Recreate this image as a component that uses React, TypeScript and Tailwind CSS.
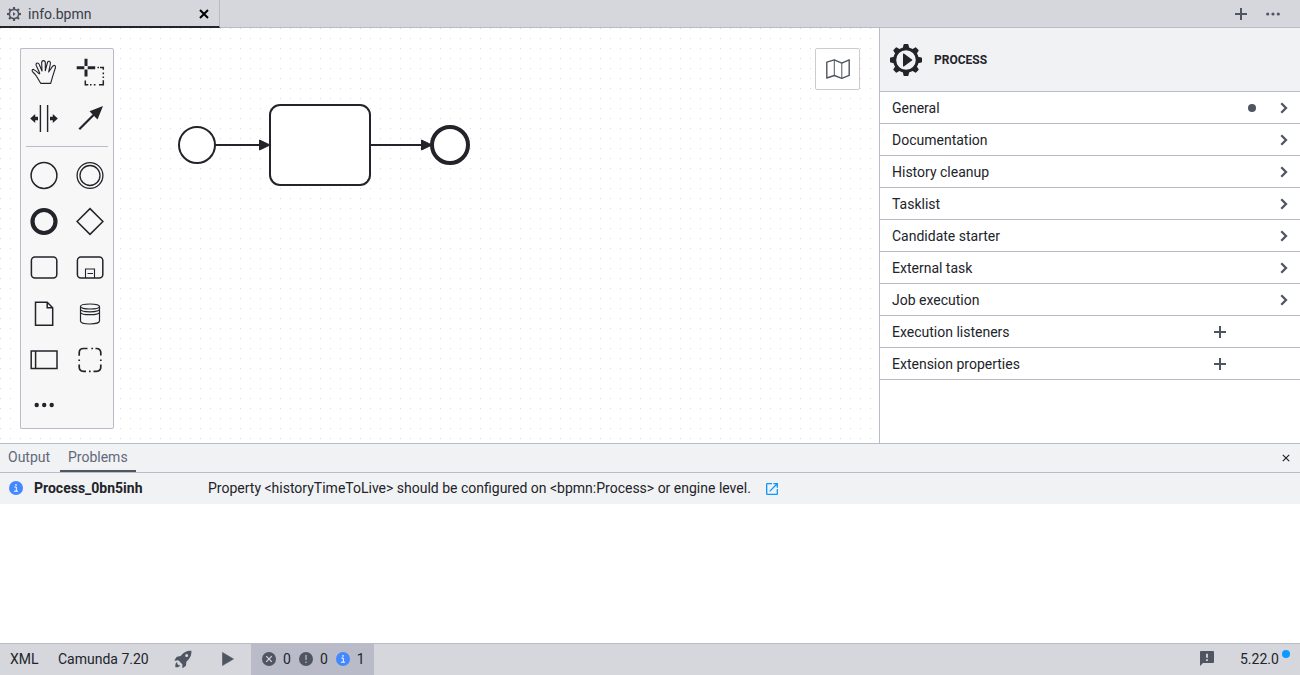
import type { ReactNode } from 'react';
import { MdOpenInNew } from 'react-icons/md';

const INK = '#22242a';

function Glyph({ children }: { children: ReactNode }) {
  return (
    <svg width="46" height="46" viewBox="0 0 46 46" fill="none" stroke={INK} strokeWidth="1.5" aria-hidden="true">
      {children}
    </svg>
  );
}

type Tool = { name: string; glyph: ReactNode };

const basicTools: Tool[] = [
  {
    name: 'Activate hand tool',
    glyph: (
      <path
        transform="translate(3 3) scale(.3333)"
        strokeWidth="3.4"
        strokeLinejoin="round"
        d="M50 94 37 72C33 66 28 62 25 58c-2-4 1-7 5-5 5 2 10 8 15 12 2 1 3 0 2-2L37 41c-2-5 0-8 3-8 3 0 5 2 6 5l8 19L53 33c0-4 2-7 5-7 4 0 6 3 6 7v23L70 33c1-4 3-6 6-5s4 4 3 8l-5 24L85 44c3-4 5-5 8-3 2 2 2 4 1 7l-8 25-6 21z"
      />
    ),
  },
  {
    name: 'Activate lasso tool',
    glyph: (
      <>
        <path strokeWidth="3" d="M9.700 18.700h7.600M20.700 18.700h7.500M19 9.700V17M19 20.400v7" />
        <path
          strokeWidth="1.500"
          d="M30.500 18.400h1.500M33 18.400h3.300v2.400M36.300 23.500v1.700M36.300 27.500v1.500M36.300 31.200v4.500H32M28.500 35.700h-1.700M24.500 35.700h-1.500M21.300 35.700h-3v-4.200"
        />
      </>
    ),
  },
  {
    name: 'Activate create/remove space tool',
    glyph: (
      <>
        <path strokeWidth="1.400" d="M19.400 10v27M26.600 10v27" />
        <path strokeWidth="3.600" d="M12.500 23.500H17M29 23.500h4.500" />
        <path fill={INK} stroke="none" d="M9.200 23.500l5-4.500v9zM36.800 23.500l-5-4.500v9z" />
      </>
    ),
  },
  {
    name: 'Activate global connect tool',
    glyph: (
      <>
        <path strokeWidth="2.200" d="M12.300 34.200 30 16.500" />
        <path fill={INK} stroke="none" d="M36 11 30.500 24.500l-8-8.300z" />
      </>
    ),
  },
];

const elementTools: Tool[] = [
  { name: 'Create start event', glyph: <circle cx="23" cy="23.500" r="12.900" /> },
  {
    name: 'Create intermediate/boundary event',
    glyph: (
      <>
        <circle cx="23" cy="23.500" r="12.900" strokeWidth="1.300" />
        <circle cx="23" cy="23.500" r="10" strokeWidth="1.300" />
      </>
    ),
  },
  { name: 'Create end event', glyph: <circle cx="23" cy="23.500" r="11.500" strokeWidth="4.200" /> },
  { name: 'Create gateway', glyph: <path d="M23 10.600 35.900 23.500 23 36.400 10.100 23.500z" /> },
  { name: 'Create task', glyph: <rect x="10.400" y="13" width="25.400" height="21" rx="3.500" /> },
  {
    name: 'Create expanded sub-process',
    glyph: (
      <>
        <rect x="10.400" y="13" width="25.400" height="21" rx="3.500" />
        <path strokeWidth="1.100" d="M18.500 34v-9h9v9M20.500 29.500h5.500" />
      </>
    ),
  },
  {
    name: 'Create data object reference',
    glyph: <path strokeWidth="1.500" d="M14.500 12.300h11.700l5.500 5.500v17.400H14.500zM26.200 12.300v5.500h5.500" />,
  },
  {
    name: 'Create data store reference',
    glyph: (
      <path
        strokeWidth="1.200"
        d="M13.500 16.500v14.500c0 1.800 4 3 9.500 3s9.500-1.200 9.500-3V16.500M13.500 16.500c0-1.500 4-2.500 9.500-2.500s9.500 1 9.500 2.500-4 2.500-9.500 2.500-9.500-1-9.500-2.500zM13.500 19.300c0 1.500 4 2.500 9.500 2.500s9.500-1 9.500-2.500M13.500 22.200c0 1.500 4 2.500 9.500 2.500s9.500-1 9.500-2.500"
      />
    ),
  },
  {
    name: 'Create pool/participant',
    glyph: <path strokeWidth="1.500" d="M10.200 15h25.800v17.500H10.200zM14.600 15v17.500" />,
  },
  {
    name: 'Create group',
    glyph: (
      <path
        strokeWidth="1.700"
        d="M20.500 12.500h-4c-2.500 0-4.300 1.800-4.300 4.300v3M12.200 23.500v1.600M12.200 28.500v2.500c0 2.500 1.800 4.300 4.300 4.300h2.500M22 35.300h1.600M26.500 35.300h3c2.500 0 4.300-1.800 4.300-4.300v-2.500M33.800 25v-1.600M33.800 19.500v-2.700c0-2.500-1.800-4.300-4.300-4.300h-1M26 12.500h-1.700"
      />
    ),
  },
  {
    name: 'Create element',
    glyph: (
      <g fill={INK} stroke="none">
        <circle cx="15.700" cy="23" r="2.200" />
        <circle cx="23.200" cy="23" r="2.200" />
        <circle cx="30.700" cy="23" r="2.200" />
      </g>
    ),
  },
];

function ToolGrid({ tools }: { tools: Tool[] }) {
  return (
    <div className="grid grid-cols-2">
      {tools.map((t) => (
        <button key={t.name} type="button" aria-label={t.name} className="size-[46px]">
          <Glyph>{t.glyph}</Glyph>
        </button>
      ))}
    </div>
  );
}

const TEETH = [0, 45, 90, 135, 180, 225, 270, 315];

function ProcessGear() {
  return (
    <svg width="32" height="32" viewBox="0 0 32 32" fill={INK} aria-hidden="true">
      {TEETH.map((a) => (
        <path key={a} transform={`rotate(${a} 16 16)`} d="M12.400 5.500 13.600.6Q13.700 0 14.300 0h3.400q.6 0 .7.600L19.600 5.500z" />
      ))}
      <circle cx="16" cy="16" r="11.300" fill="none" stroke={INK} strokeWidth="3" />
      <path d="M13 10q0-.9.800-.5l8.200 5.900q.8.600 0 1.200l-8.200 5.900q-.8.400-.8-.5z" />
    </svg>
  );
}

function TabGear() {
  return (
    <svg width="14" height="14" viewBox="0 0 14 14" fill="#505562" aria-hidden="true">
      {TEETH.map((a) => (
        <path key={a} transform={`rotate(${a} 7 7)`} d="M5.900 2.500V0h2.200v2.500z" />
      ))}
      <circle cx="7" cy="7" r="4.600" fill="none" stroke="#505562" strokeWidth="1.600" />
      <path d="M6 5 8.600 7 6 9z" />
    </svg>
  );
}

function Plus() {
  return (
    <svg width="12" height="12" viewBox="0 0 12 12" stroke="#505562" strokeWidth="2" aria-hidden="true">
      <path d="M6 0v12M0 6h12" />
    </svg>
  );
}

function InfoIcon() {
  return (
    <svg width="14" height="14" viewBox="0 0 14 14" aria-hidden="true">
      <circle cx="7" cy="7" r="7" fill="#4488ff" />
      <path d="M5.400 6h1.900v4M5 10.200h4" stroke="#fff" strokeWidth="1" fill="none" />
      <circle cx="7" cy="3.900" r=".8" fill="#fff" />
    </svg>
  );
}

function ErrorIcon() {
  return (
    <svg width="14" height="14" viewBox="0 0 14 14" aria-hidden="true">
      <circle cx="7" cy="7" r="7" fill="#505562" />
      <path d="m4.200 4.200 5.600 5.600M9.800 4.200 4.200 9.800" stroke="#d5d7dd" strokeWidth="1.200" />
    </svg>
  );
}

function WarningIcon() {
  return (
    <svg width="14" height="14" viewBox="0 0 14 14" aria-hidden="true">
      <circle cx="7" cy="7" r="7" fill="#505562" />
      <path d="M7 3v5M7 9.600v1.500" stroke="#b9bbc8" strokeWidth="1.300" />
    </svg>
  );
}

function RocketIcon() {
  return (
    <svg width="18" height="18" viewBox="24 13 54 54" fill="#505562" aria-hidden="true">
      <path
        fillRule="evenodd"
        d="M76 15C62 14 52 20 44 31L33 33q-2 1-3 3l-5 9 12-1 12 12 0 12 9-6q2-1 2-3l1-11C71 39 78 29 76 15zM62 25a4.500 4.500 0 1 1 0 9 4.500 4.500 0 0 1 0-9z"
      />
      <path d="M33 49c-5 3-5 8-5 16 7 0 13-1 15-6-3 0-5 0-7-2s-3-5-3-8z" />
    </svg>
  );
}

const groups = [
  { label: 'General', edited: true },
  { label: 'Documentation' },
  { label: 'History cleanup' },
  { label: 'Tasklist' },
  { label: 'Candidate starter' },
  { label: 'External task' },
  { label: 'Job execution' },
  { label: 'Execution listeners', list: true },
  { label: 'Extension properties', list: true },
];

function TabBar() {
  return (
    <header className="flex h-7 shrink-0 bg-[#d5d7dd]">
      <div className="flex w-[220px] items-center border-r border-b-2 border-r-[#b9bbc8] border-b-[#22242a] pt-px pr-2.5 pl-[7px]">
        <TabGear />
        <span className="ml-[7px] flex-1 text-[#393d47]">info.bpmn</span>
        <button type="button" aria-label="Close tab">
          <svg width="10" height="10" viewBox="0 0 10 10" stroke="#000" strokeWidth="2" aria-hidden="true">
            <path d="m1 1 8 8M9 1 1 9" />
          </svg>
        </button>
      </div>
      <div className="flex flex-1 items-center justify-end gap-[19px] border-b border-[#b9bbc8] pr-5">
        <button type="button" aria-label="Create new diagram">
          <Plus />
        </button>
        <button type="button" aria-label="More tabs">
          <svg width="14" height="4" viewBox="0 0 14 4" fill="#505562" aria-hidden="true">
            <circle cx="1.700" cy="2" r="1.600" />
            <circle cx="7" cy="2" r="1.600" />
            <circle cx="12.300" cy="2" r="1.600" />
          </svg>
        </button>
      </div>
    </header>
  );
}

function Diagram() {
  return (
    <svg className="absolute inset-0 size-full" role="img" aria-label="Process diagram">
      <defs>
        <pattern id="grid" width="10" height="10" patternUnits="userSpaceOnUse">
          <circle cx=".5" cy=".5" r=".5" fill="#ccc" />
        </pattern>
      </defs>
      <rect width="100%" height="100%" fill="url(#grid)" />
      <g stroke={INK} fill="#fff" strokeWidth="2">
        <path d="M215 117h48M371 117h54" />
        <path d="m259.500 112 10.500 5-10.500 5zM421.500 112l10.500 5-10.500 5z" fill={INK} strokeWidth="1" />
        <circle cx="197" cy="117" r="18" />
        <rect x="270" y="77" width="100" height="80" rx="10" />
        <circle cx="450" cy="117" r="18" strokeWidth="4" />
      </g>
    </svg>
  );
}

function Canvas() {
  return (
    <main className="relative min-w-0 flex-1">
      <Diagram />
      <div className="relative flex items-start justify-between py-5 pr-[19px] pl-5">
        <nav aria-label="Palette" className="w-[94px] rounded-xs border border-[#b9bbc8] bg-[#f7f7f8]">
          <ToolGrid tools={basicTools} />
          <hr className="mx-[5px] my-[5px] border-[#b9bbc8]" />
          <ToolGrid tools={elementTools} />
        </nav>
        <button
          type="button"
          aria-label="Open minimap"
          className="flex h-[42px] w-[45px] items-center justify-center rounded-xs border border-[#ccc] bg-white"
        >
          <svg width="24" height="20" viewBox="0 0 24 20" fill="none" stroke="#505562" strokeLinejoin="round" aria-hidden="true">
            <path strokeWidth="1.400" d="M.8 3.200 8.300.8l7.500 3.300L23.200.8v15.600l-7.400 2.900-7.500-2.800L.8 19z" />
            <path strokeWidth="1" d="M8.300.8v15.700M15.800 4.100v15.200" />
          </svg>
        </button>
      </div>
    </main>
  );
}

function PropertiesPanel() {
  return (
    <aside className="w-[421px] shrink-0 border-l border-[#b9bbc8] bg-white">
      <div className="flex h-16 items-center gap-3 border-b border-[#b9bbc8] bg-[#f1f2f4] pl-2.5">
        <ProcessGear />
        <h2 className="text-xs font-bold">PROCESS</h2>
      </div>
      {groups.map((g) => (
        <button
          key={g.label}
          type="button"
          className="flex h-8 w-full items-center border-b border-[#b9bbc8] pl-3 text-left"
        >
          <span className="flex-1">{g.label}</span>
          {g.list ? (
            <span className="pr-[74px]">
              <Plus />
            </span>
          ) : (
            <>
              {g.edited && <span className="mr-6 size-2 rounded-full bg-[#505562]" />}
              <svg
                className="mr-3"
                width="8"
                height="12"
                viewBox="0 0 8 12"
                fill="none"
                stroke="#505562"
                strokeWidth="2.300"
                aria-hidden="true"
              >
                <path d="m1.300 1.300 4.700 4.700-4.700 4.700" />
              </svg>
            </>
          )}
        </button>
      ))}
    </aside>
  );
}

function ProblemsPanel() {
  return (
    <section className="h-[200px] shrink-0 border-t border-[#b9bbc8] bg-white">
      <div className="flex h-[29px] items-stretch border-b border-[#b9bbc8] bg-[#f1f2f4] text-[#636878]">
        <button type="button" className="w-[60px] border-b-2 border-transparent px-2 text-left">
          Output
        </button>
        <button type="button" className="w-[76px] border-b-2 border-[#505562] px-2 text-left">
          Problems
        </button>
        <button type="button" aria-label="Close panel" className="mr-2.5 ml-auto">
          <svg width="8" height="8" viewBox="0 0 8 8" stroke={INK} strokeWidth="1.200" aria-hidden="true">
            <path d="m.8.800 6.400 6.400M7.200.800.800 7.200" />
          </svg>
        </button>
      </div>
      <div className="flex h-[31px] items-center bg-[#f1f2f4] px-[9px] pb-px">
        <InfoIcon />
        <strong className="ml-[11px] w-[174px] font-bold">Process_0bn5inh</strong>
        <span className="min-w-[550px]">
          Property &lt;historyTimeToLive&gt; should be configured on &lt;bpmn:Process&gt; or engine level.
        </span>
        <a href="#docs" aria-label="Open documentation" className="ml-1.5 pt-0.5 text-[#0d99ff]">
          <MdOpenInNew size={16} />
        </a>
      </div>
    </section>
  );
}

function StatusBar() {
  return (
    <footer className="flex h-8 shrink-0 items-stretch border-t border-[#b9bbc8] bg-[#d5d7dd] [&>button]:pb-0.5">
      <button type="button" className="w-12 pl-2.5 text-left">
        XML
      </button>
      <button type="button" className="w-[113px] pl-2.5 text-left">
        Camunda 7.20
      </button>
      <button type="button" aria-label="Deploy" className="flex w-11 items-center justify-center">
        <RocketIcon />
      </button>
      <button type="button" aria-label="Run" className="flex w-[46px] items-center justify-center">
        <svg width="12" height="14" viewBox="0 0 12 14" fill="#505562" aria-hidden="true">
          <path d="M.5.500 11.500 7 .5 13.500z" stroke="#505562" strokeLinejoin="round" strokeWidth=".6" />
        </svg>
      </button>
      <button type="button" aria-label="Toggle problems" className="flex w-[123px] items-center gap-2 bg-[#b9bbc8] pl-[11px]">
        <span className="flex items-center gap-[7px]">
          <ErrorIcon />0
        </span>
        <span className="flex items-center gap-[7px]">
          <WarningIcon />0
        </span>
        <span className="flex items-center gap-[7px]">
          <InfoIcon />1
        </span>
      </button>
      <button type="button" aria-label="Send feedback" className="mr-6 ml-auto">
        <svg width="14" height="15" viewBox="0 0 14 15" aria-hidden="true">
          <path d="M1 0h12q1 0 1 1v10q0 1-1 1H3l-3 3V1q0-1 1-1z" fill="#505562" />
          <path d="M7 2.800v4M7 8.200V10" stroke="#d5d7dd" strokeWidth="1.800" />
        </svg>
      </button>
      <button type="button" className="relative w-[62px] pl-0.5 text-left">
        5.22.0
        <span className="absolute top-1.5 right-2.5 size-2 rounded-full bg-[#0d99ff]" />
      </button>
    </footer>
  );
}

export default function App() {
  return (
    <div className="flex h-screen flex-col overflow-hidden bg-white font-[Roboto,sans-serif] text-sm text-[#22242a]">
      <TabBar />
      <div className="flex min-h-0 flex-1">
        <Canvas />
        <PropertiesPanel />
      </div>
      <ProblemsPanel />
      <StatusBar />
    </div>
  );
}
